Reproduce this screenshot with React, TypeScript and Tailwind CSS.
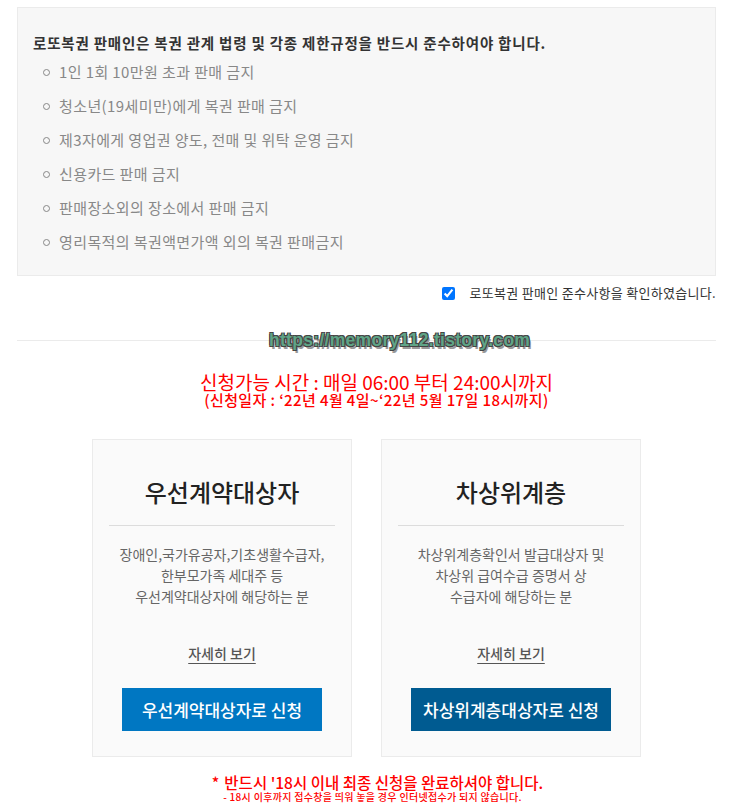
const FONT = { fontFamily: '"Noto Sans CJK KR", "Noto Sans", sans-serif' };

const RULES = [
  "1인 1회 10만원 초과 판매 금지",
  "청소년(19세미만)에게 복권 판매 금지",
  "제3자에게 영업권 양도, 전매 및 위탁 운영 금지",
  "신용카드 판매 금지",
  "판매장소외의 장소에서 판매 금지",
  "영리목적의 복권액면가액 외의 복권 판매금지",
];

type Target = {
  title: string;
  desc: string[];
  button: string;
  color: string;
};

const TARGETS: Target[] = [
  {
    title: "우선계약대상자",
    desc: ["장애인,국가유공자,기초생활수급자,", "한부모가족 세대주 등", "우선계약대상자에 해당하는 분"],
    button: "우선계약대상자로 신청",
    color: "bg-[#0077c2]",
  },
  {
    title: "차상위계층",
    desc: ["차상위계층확인서 발급대상자 및", "차상위 급여수급 증명서 상", "수급자에 해당하는 분"],
    button: "차상위계층대상자로 신청",
    color: "bg-[#005b91]",
  },
];

function TargetCard({ t }: { t: Target }) {
  return (
    <div className="w-[260px] bg-[#fafafa] border border-[#ebebeb] px-4 pt-[34px] pb-[25px] flex flex-col items-center">
      <h3 className="text-[24px] leading-[36px] text-[#222] font-medium">{t.title}</h3>
      <div className="w-full h-px bg-[#dcdcdc] mt-[15px]" />
      <div className="mt-[18px] text-[14px] leading-[21px] text-[#666] text-center">
        {t.desc.map((d) => (
          <p key={d}>{d}</p>
        ))}
      </div>
      <a href="#" className="mt-[36px] text-[14px] leading-[20px] font-medium text-[#555] underline underline-offset-4">
        자세히 보기
      </a>
      <button className={`mt-[25px] w-[200px] h-[43px] ${t.color} text-white text-[17px] font-medium`}>
        {t.button}
      </button>
    </div>
  );
}

export default function App() {
  return (
    <div className="w-[730px] min-h-[811px] bg-white pl-[17px] pr-[14px] pt-[7px]" style={FONT}>
      {/* 준수사항 */}
      <section className="bg-[#f7f7f7] border border-[#ebebeb] pl-[15px] pt-[25px] pb-[16px]">
        <h2 className="text-[14.5px] leading-[20px] font-bold text-[#333] tracking-[0.8px]">
          로또복권 판매인은 복권 관계 법령 및 각종 제한규정을 반드시 준수하여야 합니다.
        </h2>
        <ul className="mt-[2px]">
          {RULES.map((r) => (
            <li key={r} className="flex items-center h-[34px] text-[15px] text-[#888] tracking-[0.4px]">
              <span className="w-[7px] h-[7px] rounded-full border-[1.5px] border-[#888] ml-[10px] mr-[9px]" />
              {r}
            </li>
          ))}
        </ul>
      </section>

      <label className="flex items-center justify-end gap-[15px] mt-[7px] text-[13px] leading-[20px] text-[#333] tracking-[0.3px]">
        <input type="checkbox" defaultChecked className="w-[13px] h-[13px] accent-[#0075ff]" />
        로또복권 판매인 준수사항을 확인하였습니다.
      </label>

      {/* 구분선 + 워터마크 */}
      <div className="relative mt-[37px] h-px bg-[#ebebeb]">
        <span
          className="absolute left-[252px] top-[-10px] text-[17.5px] leading-[20px] font-bold text-[#5fa487] tracking-[0.3px]"
          style={{
            fontFamily: '"Liberation Sans", sans-serif',
            textShadow:
              "-1px -1px 0 #444, 1px -1px 0 #444, -1px 1px 0 #444, 1px 1px 0 #444, 2px 3px 0 #999",
          }}
        >
          https://memory112.tistory.com
        </span>
      </div>

      {/* 신청 시간 */}
      <div className="mt-[31px] pl-[20px] text-center text-[#ff0000]">
        <p className="text-[19px] leading-[20px]">신청가능 시간 : 매일 06:00 부터 24:00시까지</p>
        <p className="text-[15px] leading-[16px] font-medium tracking-[0.4px]">(신청일자 : ‘22년 4월 4일~‘22년 5월 17일 18시까지)</p>
      </div>

      {/* 신청 대상 */}
      <div className="mt-[31px] flex justify-center gap-[29px]">
        {TARGETS.map((t) => (
          <TargetCard key={t.title} t={t} />
        ))}
      </div>

      {/* 안내 */}
      <div className="mt-[16px] pl-[22px] text-center text-[#ff0000]">
        <p className="text-[15.5px] leading-[18px] font-medium">
          <span className="mr-[5px]">*</span>반드시 '18시 이내 최종 신청을 완료하셔야 합니다.
        </p>
        <p className="pr-[10px] text-[10px] leading-[12px] font-medium tracking-[0.3px]">- 18시 이후까지 접수창을 띄워 놓을 경우 인터넷접수가 되지 않습니다.</p>
      </div>
    </div>
  );
}
